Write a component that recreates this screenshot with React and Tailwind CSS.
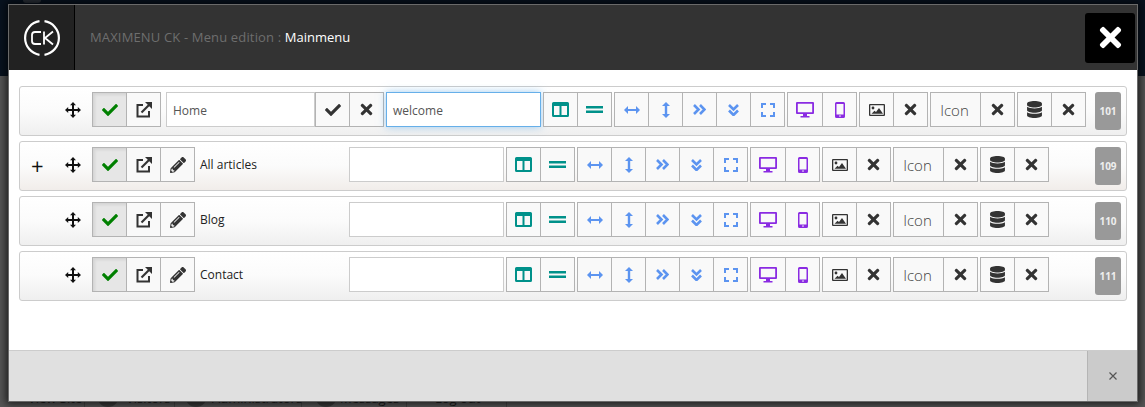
import React from "react";
import { FaCheck, FaTimes, FaPencilAlt, FaDatabase } from "react-icons/fa";

const font = "font-['Open_Sans','Noto_Sans',sans-serif]";

// icon drawings
const MoveIcon = () => (
  <svg width="16" height="16" viewBox="0 0 16 16" fill="#111">
    <path d="M8 0l3 3.200H9V7h3.800V5l3.200 3-3.200 3V9H9v3.800h2L8 16l-3-3.200h2V9H3.200v2L0 8l3.200-3v2H7V3.200H5z" />
  </svg>
);
const ExternalLink = () => (
  <svg width="16" height="16" viewBox="0 0 16 16" fill="none" stroke="#333">
    <path strokeWidth="2" d="M7 3H1.500v11.500H13V9" />
    <path strokeWidth="2.200" d="M5.500 10.500L13.500 2.500" />
    <path fill="#333" stroke="none" d="M9 0h7v7z" />
  </svg>
);
const Columns = () => (
  <svg width="17" height="15" viewBox="0 0 17 15" fill="#00918a">
    <path d="M1.500 0h14A1.500 1.500 0 0 1 17 1.500v12a1.500 1.500 0 0 1-1.500 1.500h-14A1.500 1.500 0 0 1 0 13.500v-12A1.500 1.500 0 0 1 1.500 0zM2 4v9h5.500V4zm7.500 0v9H15V4z" fillRule="evenodd" />
  </svg>
);
const Equals = () => (
  <svg width="17" height="7" viewBox="0 0 17 7" fill="#00918a">
    <rect width="17" height="2.500" />
    <rect y="4.500" width="17" height="2.500" />
  </svg>
);
const ArrowsH = () => (
  <svg width="16" height="8" viewBox="0 0 16 8" fill="#5c94f0">
    <path d="M0 4l4-4v3h8V0l4 4-4 4V5H4v3z" />
  </svg>
);
const ArrowsV = () => (
  <svg width="8" height="16" viewBox="0 0 8 16" fill="#5c94f0">
    <path d="M4 0l4 4H5.200v8H8l-4 4-4-4h2.800V4H0z" />
  </svg>
);
const ChevronsRight = () => (
  <svg width="13" height="11" viewBox="0 0 13 11" fill="none" stroke="#5c94f0" strokeWidth="2.600">
    <path d="M1 1l4.500 4.500L1 10M7 1l4.500 4.500L7 10" />
  </svg>
);
const ChevronsDown = () => (
  <svg width="11" height="12" viewBox="0 0 11 12" fill="none" stroke="#5c94f0" strokeWidth="2.600">
    <path d="M1 1l4.500 4.500L10 1M1 6.500L5.500 11 10 6.500" />
  </svg>
);
const Corners = () => (
  <svg width="14" height="14" viewBox="0 0 14 14" fill="none" stroke="#5c94f0" strokeWidth="2">
    <path d="M1 5V1h4M9 1h4v4M13 9v4H9M5 13H1V9" />
  </svg>
);
const Desktop = () => (
  <svg width="18" height="16" viewBox="0 0 18 16" fill="#8a2be2">
    <path d="M1 0h16a1 1 0 0 1 1 1v10a1 1 0 0 1-1 1h-6v2h2.500v1.500h-9V14H7v-2H1a1 1 0 0 1-1-1V1a1 1 0 0 1 1-1zm.8 1.800v8.400h14.400V1.800z" fillRule="evenodd" />
  </svg>
);
const Phone = () => (
  <svg width="10" height="16" viewBox="0 0 10 16" fill="#8a2be2">
    <path d="M1.500 0h7A1.500 1.500 0 0 1 10 1.500v13A1.500 1.500 0 0 1 8.500 16h-7A1.500 1.500 0 0 1 0 14.500v-13A1.500 1.500 0 0 1 1.500 0zM1.500 2v10.500h7V2zM5 13.300a.8.8 0 1 0 0 1.600.8.8 0 0 0 0-1.600z" fillRule="evenodd" />
  </svg>
);
const Picture = () => (
  <svg width="16" height="12" viewBox="0 0 16 12" fill="#333">
    <path d="M1 0h14a1 1 0 0 1 1 1v10a1 1 0 0 1-1 1H1a1 1 0 0 1-1-1V1a1 1 0 0 1 1-1zm.3 1.300v9.400h13.400V1.300z" fillRule="evenodd" />
    <circle cx="4" cy="4" r="1.400" />
    <path d="M2.500 9.800l3-3 1.500 1.300 3-4 4 5.700z" />
  </svg>
);
const Cross = () => <FaTimes size={17} color="#333" />;
const Tick = ({ color = "#333" }) => <FaCheck size={16} color={color} />;

function Btn({ children, active, wide, last, fat }) {
  return (
    <div
      className={`h-[35px] shrink-0 flex items-center justify-center border border-[#b3b3b3] ${last ? "border-r" : "border-r-0"} ${wide ? "w-[50px]" : last || fat ? "w-[35px]" : "w-[34px]"} ${active ? "bg-[#e6e6e6] shadow-[inset_2px_2px_3px_rgba(0,0,0,0.08)]" : "bg-[#f9f9f9]"}`}
    >
      {children}
    </div>
  );
}

function Group({ children, className = "" }) {
  return <div className={`flex shrink-0 ${className}`}>{children}</div>;
}

function Field({ value = "", focus, className = "" }) {
  return (
    <div
      className={`h-[35px] shrink-0 flex items-center pl-[6px] pt-[3px] bg-white text-[12px] text-[#555] border ${focus ? "border-[#66afe9] shadow-[0_0_8px_rgba(102,175,233,0.6)]" : "border-[#ccc]"} ${className}`}
    >
      {value}
    </div>
  );
}

// everything right of the title field, the same in every row
function Tools() {
  return (
    <>
      <Group className="ml-[2px]">
        <Btn><Columns /></Btn>
        <Btn last><Equals /></Btn>
      </Group>
      <Group className="ml-[2px]">
        <Btn><ArrowsH /></Btn>
        <Btn><ArrowsV /></Btn>
        <Btn><ChevronsRight /></Btn>
        <Btn><ChevronsDown /></Btn>
        <Btn last><Corners /></Btn>
      </Group>
      <Group className="ml-[2px]">
        <Btn fat><Desktop /></Btn>
        <Btn last><Phone /></Btn>
      </Group>
      <Group className="ml-[2px]">
        <Btn><Picture /></Btn>
        <Btn last><Cross /></Btn>
      </Group>
      <Group className="ml-[2px]">
        <Btn wide><span className="pr-[2px] pt-[2px] text-[15px] font-light text-[#444]">Icon</span></Btn>
        <Btn last><Cross /></Btn>
      </Group>
      <Group className="ml-[2px]">
        <Btn><FaDatabase size={17} color="#333" /></Btn>
        <Btn last><Cross /></Btn>
      </Group>
    </>
  );
}

function Row({ title, id, plus, home }) {
  return (
    <div className={`relative h-[50px] rounded-[3px] border border-[#ccc] bg-gradient-to-b from-white via-[#fbfbfb] flex items-start pt-[5px] ${plus ? "to-[#f1edea]" : "to-[#efefef]"}`}>
      <div className="w-[34px] h-[35px] pl-[11px] flex items-center shrink-0">
        {plus && <span className="text-[22px] leading-none text-[#111]">+</span>}
      </div>
      <div className="w-[38px] h-[35px] flex items-center justify-center shrink-0">
        <MoveIcon />
      </div>
      <Group>
        <Btn active><Tick color="#008000" /></Btn>
        <Btn last={home}><ExternalLink /></Btn>
        {!home && <Btn last><FaPencilAlt size={16} color="#333" /></Btn>}
      </Group>
      {home ? (
        <>
          <Field value="Home" className="ml-[5px] w-[149px]" />
          <Group>
            <Btn><Tick /></Btn>
            <Btn last><Cross /></Btn>
          </Group>
          <Field value="welcome" focus className="ml-[2px] w-[155px]" />
        </>
      ) : (
        <>
          <div className="w-[154px] pl-[5px] h-[35px] flex items-center text-[12px] text-[#222] shrink-0">{title}</div>
          <Field className="w-[155px]" />
        </>
      )}
      <Tools />
      <div className="absolute right-[5px] top-[5px] w-[26px] h-[38px] rounded-[3px] bg-[#999] text-[#eee] text-[10px] font-bold flex items-center justify-center">
        {id}
      </div>
    </div>
  );
}

const behind = [
  { label: "View Site", w: "w-[85px]", pad: "pl-[28px]" },
  { label: "Visitors", w: "w-[90px]", pad: "pl-[41px]", dot: "left-[12px]" },
  { label: "Administrators", w: "w-[127px]", pad: "pl-[37px]", dot: "left-[10px]" },
  { label: "Messages", w: "w-[105px]", pad: "pl-[38px]", dot: "left-[13px]" },
  { label: "Log out", w: "w-[100px]", pad: "pl-[28px]" },
];

export default function App() {
  return (
    <div className={`relative w-[1145px] h-[407px] overflow-hidden bg-[#565656] ${font}`}>
      {/* dimmed page behind the modal */}
      <div className="h-[76px] bg-[#08121f]" />
      <div className="absolute left-[23px] top-0 w-[18px] h-[3px] rounded-b-full bg-[#2a3038]" />
      <div className="absolute left-0 right-0 bottom-0 h-[18px] flex">
        {behind.map((b) => (
          <div key={b.label} className={`relative ${b.w} ${b.pad} h-full flex items-end border-r border-[#444] text-[13px] leading-[17px] text-[#1c1c1c]`}>
            {b.dot && <div className={`absolute ${b.dot} top-[-4px] w-[22px] h-[22px] rounded-full bg-[#3a3a3a]`} />}
            <span className="relative">{b.label}</span>
          </div>
        ))}
      </div>

      <div className="absolute left-[8px] top-[4px] w-[1130px] h-[398px] border border-[#6a6a6a] shadow-[0_0_8px_2px_rgba(0,0,0,0.7)] bg-white flex flex-col">
        <div className="h-[65px] bg-[#333] flex items-center shrink-0">
          <div className="w-[66px] h-full bg-[#222] border-r border-black flex items-center justify-center shrink-0">
            <svg width="36" height="36" viewBox="0 0 36 36" fill="none" stroke="#fff">
              <path strokeWidth="2.200" d="M15.500 1.200A17 17 0 0 0 15.500 34.800M20.500 1.200A17 17 0 0 1 20.500 34.800" />
              <path strokeWidth="1.800" d="M17 12h-6a3 3 0 0 0-3 3v6a3 3 0 0 0 3 3h6M20 11.500v13M29 11.500L21 18l8 6.500" />
            </svg>
          </div>
          <div className="ml-[15px] text-[13px] text-[#6e6e6e] tracking-[0.15px]">
            MAXIMENU CK - Menu edition : <span className="text-white tracking-normal">Mainmenu</span>
          </div>
          <div className="ml-auto mr-[2px] w-[50px] h-[50px] rounded-[3px] bg-black flex items-center justify-center">
            <FaTimes size={31} color="#fff" />
          </div>
        </div>

        <div className="flex-1 px-[10px] pt-[16px] flex flex-col gap-[5px]">
          <Row home id="101" />
          <Row plus title="All articles" id="109" />
          <Row title="Blog" id="110" />
          <Row title="Contact" id="111" />
        </div>

        <div className="h-[51px] bg-[#e0e0e0] border-t border-[#ccc] flex justify-end shrink-0">
          <div className="w-[50px] h-full bg-[#cbcbcb] border-l border-[#b5b5b5] flex items-center justify-center">
            <svg width="8" height="8" viewBox="0 0 8 8" stroke="#555" strokeWidth="1.200">
              <path d="M0.500 0.500l7 7M7.500 0.500l-7 7" />
            </svg>
          </div>
        </div>
      </div>
    </div>
  );
}
